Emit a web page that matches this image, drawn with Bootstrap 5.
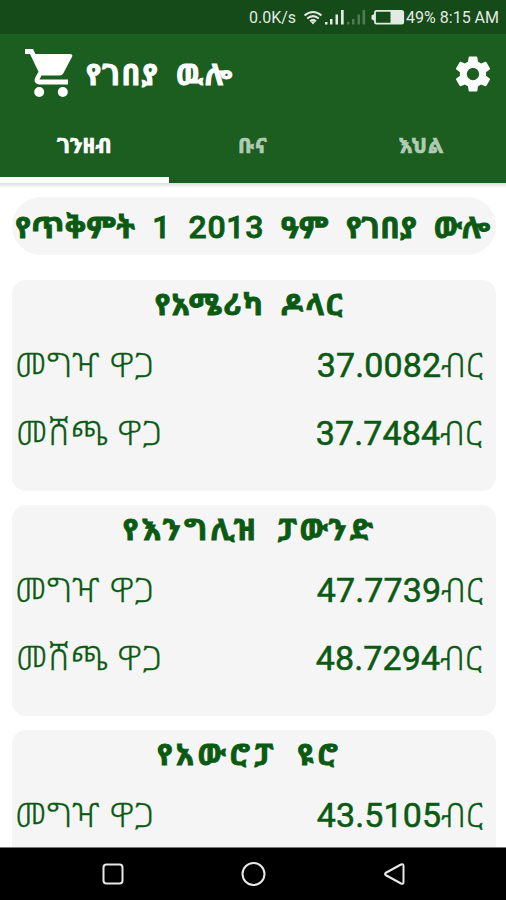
<!DOCTYPE html>
<html lang="am">
<head>
<meta charset="utf-8">
<meta name="viewport" content="width=device-width, initial-scale=1">
<title>የገበያ ዉሎ</title>
<link rel="stylesheet" href="https://cdn.jsdelivr.net/npm/bootstrap@5.3.0/dist/css/bootstrap.min.css">
<style>
  body { font-family: Roboto, "Noto Sans Ethiopic", "Noto Sans", "DejaVu Sans", sans-serif; color: #0b5a14; height: 900px; }
  .status { height: 34px; background: #154a19; color: #e3e9e3; font-size: 16px; padding: 2px 7px 0 0; }
  .appbar { background: #1b5e20; height: 149px; }
  .titlebar { height: 76px; padding: 3px 12px 0 25px; }
  .title-text { font-size: 29px; margin-left: 12px; padding-top: 4px; letter-spacing: 1.6px; word-spacing: 8px; -webkit-text-stroke: .9px; }
  .tabs { height: 73px; }
  .tab-item { width: 169px; font-size: 21px; color: #b1cab3; border: 0; border-bottom: 6px solid transparent; background: none; padding: 7px 0 0; letter-spacing: 1.2px; -webkit-text-stroke: .7px; }
  .tab-item.current { color: #fff; border-bottom-color: #fff; letter-spacing: .1px; }
  .shade { height: 5px; margin-bottom: 9px; background: linear-gradient(#dcdcdc, #fff); }
  .date-pill { height: 58px; margin: 0 10px 25px 12px; padding: 2px 2px 0 0; border-radius: 29px; background: #f5f5f5; font-size: 30px; letter-spacing: .5px; word-spacing: 8.8px; }
  .date-pill, .rate-name { -webkit-text-stroke: .9px; }
  .figures { font-size: 32px; font-weight: 500; letter-spacing: .7px; -webkit-text-stroke: .8px; }
  .rate { height: 211px; margin: 0 10px 14px 12px; border-radius: 14px; background: #f5f5f5; }
  .rate-name { height: 60px; padding: 2px 9px 0 0; font-size: 30px; word-spacing: 8px; }
  .rate-name.dollar { letter-spacing: 1.7px; }
  .rate-name.pound { letter-spacing: 3.3px; }
  .rate-name.euro { letter-spacing: 4.1px; }
  .rate-row { height: 68px; font-size: 34px; padding: 0 13px 0 3px; }
  .rate-row + .rate-row { padding: 0 14px 0 4px; }
  .rate-label { letter-spacing: 1px; font-weight: 300; -webkit-text-stroke: .3px; }
  .amount { -webkit-text-stroke: .55px; letter-spacing: .1px; }
  .unit { -webkit-text-stroke: .3px; font-weight: 300; }
  .navkeys { height: 53px; background: #000; border-top: 1px solid #777; }
</style>
<script src="https://cdn.jsdelivr.net/npm/bootstrap@5.3.0/dist/js/bootstrap.bundle.min.js"></script>
</head>
<body class="d-flex flex-column overflow-hidden bg-white">
<div class="status d-flex align-items-center justify-content-end flex-shrink-0">
  <span>0.0K/s</span>
  <svg class="ms-1" width="106" height="20" viewBox="299 8 106 20">
    <g fill="none" stroke="#e3e9e3" stroke-width="2"><path d="M303.500 15.500Q312 8.500 320.500 15.500M306.200 18.500Q312 13.800 317.800 18.500M309 21.300Q312 19 315 21.300"/></g>
    <path fill="#e3e9e3" d="M309.500 21.500h5L312 24.500zM324 22h2.500v2.500H324zM329 19h2.500v5.500H329zM334.500 14.500h2.500v10h-2.500zM340 10h2.700v14.500H340z"/>
    <path fill="#4f7a53" d="M346 22h2.500v2.500H346zM351 19h2.500v5.500H351zM356.500 14.500h2.500v10h-2.500zM361.500 10h2.700v14.500h-2.700z"/>
    <path fill="none" stroke="#e3e9e3" stroke-width="1.800" d="M374 12.500q0-1.600 1.600-1.600h25q1.600 0 1.600 1.600v9.500q0 1.600-1.600 1.600h-25q-1.600 0-1.600-1.600z"/>
    <path fill="#e3e9e3" d="M389.500 11h12.500v12.500h-12.500zM374 13.500l-3.500 2v3.800l3.500 2z"/>
  </svg>
  <span>49%</span><span class="ms-1">8:15 AM</span>
</div>
<header class="appbar flex-shrink-0">
  <div class="titlebar d-flex align-items-center">
    <svg width="49" height="49" viewBox="0 0 49 49" fill="#fff">
      <path d="M0 0h8l2.500 5h34.500q3 0 2.200 2.500L38.500 24q-1.200 2.500-4 2.500H16.500L14.500 30.500H43v5H14q-6.500-1.500-3.500-7.500l3-5.300L5 5H0z"/>
      <circle cx="14.200" cy="43" r="5"/><circle cx="37.800" cy="43" r="5"/>
    </svg>
    <span class="title-text text-white fw-bold">የገበያ ዉሎ</span>
    <svg class="ms-auto" width="42" height="42" viewBox="0 0 24 24" fill="#fff"><path d="M19.430 12.980c.04-.32.07-.64.07-.98s-.03-.66-.07-.98l2.110-1.650c.19-.15.24-.42.12-.64l-2-3.460c-.12-.22-.39-.3-.61-.22l-2.490 1c-.52-.4-1.080-.73-1.690-.98l-.38-2.650C14.460 2.180 14.250 2 14 2h-4c-.25 0-.46.18-.49.42l-.38 2.650c-.61.25-1.170.59-1.690.98l-2.490-1c-.23-.09-.49 0-.61.22l-2 3.460c-.13.22-.07.49.12.64l2.110 1.650c-.04.32-.07.65-.07.98s.03.66.07.98l-2.110 1.650c-.19.15-.24.42-.12.64l2 3.460c.12.22.39.3.61.22l2.490-1c.52.4 1.080.73 1.690.98l.38 2.650c.03.24.24.42.49.42h4c.25 0 .46-.18.49-.42l.38-2.650c.61-.25 1.170-.59 1.690-.98l2.490 1c.23.09.49 0 .61-.22l2-3.460c.12-.22.07-.49-.12-.64zM12 15.500c-1.930 0-3.500-1.570-3.500-3.500s1.570-3.500 3.500-3.500 3.500 1.570 3.500 3.500-1.570 3.500-3.500 3.500z"/></svg>
  </div>
  <nav class="tabs d-flex">
    <button class="tab-item current fw-bold">ገንዘብ</button><button class="tab-item fw-bold">ቡና</button><button class="tab-item fw-bold">እህል</button>
  </nav>
</header>
<main class="flex-grow-1 overflow-hidden">
  <div class="shade"></div>
  <div class="date-pill d-flex align-items-center justify-content-center fw-bold text-nowrap"><span>የጥቅምት <span class="figures">1 2013</span> ዓም የገበያ ውሎ</span></div>
  <section class="rate">
    <div class="rate-name dollar fw-bold text-center">የአሜሪካ ዶላር</div>
    <div class="rate-row d-flex justify-content-between"><span class="rate-label">መግዣ ዋጋ</span><span class="amount">37.0082<span class="unit">ብር</span></span></div>
    <div class="rate-row d-flex justify-content-between"><span class="rate-label">መሸጫ ዋጋ</span><span class="amount">37.7484<span class="unit">ብር</span></span></div>
  </section>
  <section class="rate">
    <div class="rate-name pound fw-bold text-center">የእንግሊዝ ፓውንድ</div>
    <div class="rate-row d-flex justify-content-between"><span class="rate-label">መግዣ ዋጋ</span><span class="amount">47.7739<span class="unit">ብር</span></span></div>
    <div class="rate-row d-flex justify-content-between"><span class="rate-label">መሸጫ ዋጋ</span><span class="amount">48.7294<span class="unit">ብር</span></span></div>
  </section>
  <section class="rate">
    <div class="rate-name euro fw-bold text-center">የአውሮፓ ዩሮ</div>
    <div class="rate-row d-flex justify-content-between"><span class="rate-label">መግዣ ዋጋ</span><span class="amount">43.5105<span class="unit">ብር</span></span></div>
  </section>
</main>
<footer class="navkeys flex-shrink-0">
  <svg class="d-block" width="506" height="52" viewBox="0 848 506 52" fill="none" stroke="#e8e8e8" stroke-width="2">
    <rect x="103.500" y="864.500" width="19" height="19" rx="3"/>
    <circle cx="253.500" cy="874" r="11"/>
    <path stroke-linejoin="round" d="M385.500 873q-1 1 0 2L401 883.500q2.500.8 2.500-1.500V866q0-2.300-2.500-1.500z"/>
  </svg>
</footer>
</body>
</html>
